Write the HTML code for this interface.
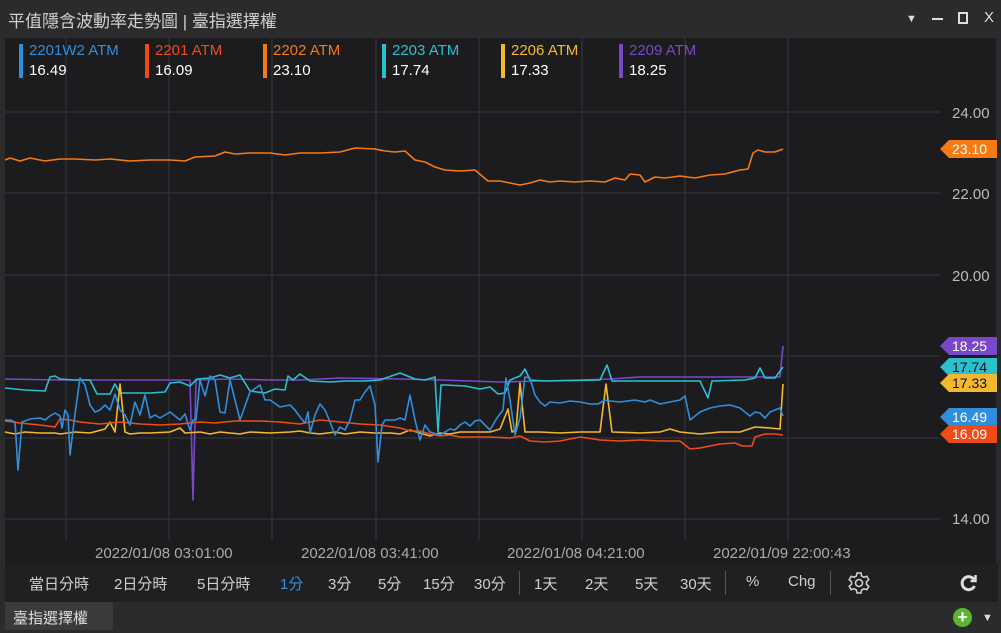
<!DOCTYPE html>
<html><head><meta charset="utf-8"><style>
*{margin:0;padding:0;box-sizing:border-box}
body{width:1001px;height:633px;background:#2b2b2e;font-family:"Liberation Sans","Noto Sans CJK TC",sans-serif;overflow:hidden;position:relative;color:#ddd}
.title{position:absolute;left:8px;top:7px;font-size:17px;color:#d0d0d0}
.ctl{position:absolute;font-size:16px;color:#ddd}
.chart{position:absolute;left:5px;top:38px;width:993px;height:525px;background:#1c1c1f}
.leg{position:absolute;top:41px;font-size:15px;line-height:20px}
.leg .bar{position:absolute;left:0;top:3px;width:4px;height:34px}
.leg .n{margin-left:10px}
.leg .v{margin-left:10px;color:#fff}
.tb{position:absolute;left:5px;top:563px;width:993px;height:39px;background:#202023}
.tb span{position:absolute;top:10px;font-size:15px;color:#cfcfcf}
.sep{position:absolute;top:8px;width:1px;height:24px;background:#555}
.tag{position:absolute;left:949px;width:48px;height:18px;font-size:14px;line-height:18px;padding-left:3px}
.tag:before{content:"";position:absolute;left:-9px;top:0;border-right:9px solid;border-right-color:inherit;border-top:9px solid transparent;border-bottom:9px solid transparent}
</style></head><body>
<div class="title">平值隱含波動率走勢圖 | 臺指選擇權</div>
<div class="ctl" style="left:906px;font-size:11px;top:13px">▼</div>
<div style="position:absolute;left:932px;top:18px;width:11px;height:2px;background:#ddd"></div>
<div style="position:absolute;left:958px;top:12px;width:10px;height:12px;border:2px solid #ddd"></div>
<div class="ctl" style="left:984px;top:9px;font-size:15px">X</div>
<div class="chart"></div>
<svg style="position:absolute;left:0;top:0" width="1001" height="563">
<g stroke="#2f2f34" stroke-width="1.5">
<line x1="5" y1="112" x2="940" y2="112"/><line x1="5" y1="193" x2="940" y2="193"/><line x1="5" y1="275" x2="940" y2="275"/><line x1="5" y1="356" x2="940" y2="356"/><line x1="5" y1="438" x2="940" y2="438"/><line x1="5" y1="519" x2="940" y2="519"/>
<line x1="66" y1="38" x2="66" y2="540"/><line x1="169" y1="38" x2="169" y2="540"/><line x1="272" y1="38" x2="272" y2="540"/><line x1="376" y1="38" x2="376" y2="540"/><line x1="479" y1="38" x2="479" y2="540"/><line x1="582" y1="38" x2="582" y2="540"/><line x1="685" y1="38" x2="685" y2="540"/><line x1="788" y1="38" x2="788" y2="540"/>
<line x1="997" y1="38" x2="997" y2="563"/>
</g>
<g fill="#bbb" font-size="15" font-family="Liberation Sans,sans-serif">
<text x="952" y="118">24.00</text><text x="952" y="199">22.00</text><text x="952" y="281">20.00</text><text x="952" y="524">14.00</text>
<text x="95" y="558" fill="#aaa">2022/01/08 03:01:00</text><text x="301" y="558" fill="#aaa">2022/01/08 03:41:00</text><text x="507" y="558" fill="#aaa">2022/01/08 04:21:00</text><text x="713" y="558" fill="#aaa">2022/01/09 22:00:43</text>
</g>
<g fill="none" stroke-width="1.6" stroke-linejoin="round">
<polyline stroke="#f57a14" points="5,160 10,158 20,161 30,158 45,161 60,159 75,159 95,160 110,159 130,161 150,160 170,160 185,161 195,157 215,156 225,152 235,154 250,153 270,153 285,155 300,153 320,153 340,152 355,148 375,149 385,151 395,152 405,151 415,160 425,162 435,167 445,170 460,171 475,170 482,176 488,181 500,181 510,183 520,185 530,183 540,180 550,182 560,181 575,182 590,181 605,182 615,178 625,180 630,174 640,175 645,182 655,177 665,178 680,176 695,178 710,175 725,174 740,170 748,169 753,153 758,150 765,152 775,152 783,149"/>
<polyline stroke="#7848c8" points="5,379 60,380 100,380 150,380 190,380 193,500 196,380 230,379 270,380 300,380 340,378 400,379 440,380 470,381 500,382 540,381 580,380 610,379 640,377 700,377 740,377 780,377 783,346"/>
<polyline stroke="#2ac0d0" points="5,388 25,390 45,391 50,377 55,376 60,379 75,380 90,380 97,394 110,394 115,384 120,393 125,393 150,393 165,392 170,383 180,382 190,386 197,379 210,378 220,375 230,378 240,375 250,391 265,393 275,389 285,390 288,376 293,380 300,374 310,381 330,382 345,381 365,381 380,380 400,373 415,379 425,380 435,377 438,432 441,385 445,385 465,386 480,389 490,387 498,394 505,393 510,380 520,376 525,369 530,380 545,381 600,380 607,365 612,381 640,381 680,381 700,381 708,398 712,381 745,380 755,378 760,368 765,378 775,378 783,367"/>
<polyline stroke="#f4b82e" points="5,432 15,434 25,432 40,433 55,433 60,434 75,432 90,433 105,429 110,422 115,432 120,384 125,432 130,434 140,433 150,433 170,432 180,428 185,433 200,432 210,434 220,432 240,434 250,432 270,433 290,432 300,431 310,433 320,434 335,432 345,434 360,432 375,433 380,433 390,433 400,434 410,430 420,433 430,436 440,433 450,434 460,432 470,432 480,432 490,432 500,429 508,409 512,432 516,430 520,383 525,432 540,432 560,433 580,432 600,432 606,384 612,432 640,433 660,432 670,429 680,432 700,434 720,432 740,432 755,427 770,428 780,429 783,384"/>
<polyline stroke="#ee4b18" points="5,421 20,423 40,425 55,427 60,419 70,420 80,422 100,424 120,422 140,424 160,425 180,424 200,422 215,423 235,421 260,421 280,422 300,424 320,420 340,422 360,424 380,425 400,428 410,431 420,431 430,434 440,436 450,435 460,437 475,437 490,437 510,438 520,436 530,441 545,442 560,441 570,439 580,437 600,440 620,441 640,440 660,441 680,441 690,449 700,448 720,444 735,443 742,446 752,446 755,437 765,434 775,434 783,435"/>
<polyline stroke="#2f8fdc" points="5,420 10,420 15,422 18,470 22,422 30,419 40,418 45,420 50,416 55,413 60,416 62,428 65,410 68,415 70,455 75,414 80,378 85,385 90,405 95,412 100,410 105,405 110,410 115,394 120,410 125,415 130,425 135,402 140,415 145,395 150,418 155,415 160,418 170,412 180,420 185,414 190,430 193,420 196,420 200,380 205,396 210,376 215,380 220,412 225,413 230,380 240,420 250,392 260,385 265,400 270,400 280,407 290,405 295,410 300,417 305,423 308,412 310,433 315,415 320,404 325,410 330,422 335,435 340,427 345,430 350,420 355,400 360,400 365,392 370,386 375,405 378,462 382,425 385,420 395,420 400,418 405,420 410,395 415,420 420,440 425,425 430,432 440,435 450,429 455,430 460,425 465,422 470,426 475,421 480,420 485,425 490,430 497,418 503,410 506,378 510,400 515,435 520,418 525,377 530,378 535,395 540,402 545,406 550,402 560,403 570,401 580,402 590,404 598,404 605,400 610,401 620,402 635,400 645,402 650,400 660,404 670,402 680,400 685,396 690,420 695,416 700,412 710,408 720,406 730,405 740,408 745,412 750,416 755,412 760,413 765,418 770,412 775,410 780,408 783,416"/>
</g>
</svg>
<div class="leg" style="left:19px"><div class="bar" style="background:#2f8fdc"></div><div class="n" style="color:#2f8fdc">2201W2 ATM</div><div class="v">16.49</div></div>
<div class="leg" style="left:145px"><div class="bar" style="background:#ee4b18"></div><div class="n" style="color:#ee4b18">2201 ATM</div><div class="v">16.09</div></div>
<div class="leg" style="left:263px"><div class="bar" style="background:#f57a14"></div><div class="n" style="color:#f57a14">2202 ATM</div><div class="v">23.10</div></div>
<div class="leg" style="left:382px"><div class="bar" style="background:#2ac0d0"></div><div class="n" style="color:#2ac0d0">2203 ATM</div><div class="v">17.74</div></div>
<div class="leg" style="left:501px"><div class="bar" style="background:#f4b82e"></div><div class="n" style="color:#f4b82e">2206 ATM</div><div class="v">17.33</div></div>
<div class="leg" style="left:619px"><div class="bar" style="background:#7848c8"></div><div class="n" style="color:#7848c8">2209 ATM</div><div class="v">18.25</div></div>
<div class="tag" style="top:140px;background:#f57a14;border-color:#f57a14;color:#fff">23.10</div>
<div class="tag" style="top:337px;background:#7848c8;border-color:#7848c8;color:#fff">18.25</div>
<div class="tag" style="top:358px;background:#2ac0d0;border-color:#2ac0d0;color:#111">17.74</div>
<div class="tag" style="top:374px;background:#f4b82e;border-color:#f4b82e;color:#111">17.33</div>
<div class="tag" style="top:408px;background:#2f8fdc;border-color:#2f8fdc;color:#fff">16.49</div>
<div class="tag" style="top:425px;background:#ee4b18;border-color:#ee4b18;color:#fff">16.09</div>
<div class="tb">
<span style="left:24px">當日分時</span><span style="left:109px">2日分時</span><span style="left:192px">5日分時</span><span style="left:275px;color:#2f8fdc">1分</span><span style="left:323px">3分</span><span style="left:373px">5分</span><span style="left:418px">15分</span><span style="left:469px">30分</span>
<div class="sep" style="left:514px"></div>
<span style="left:529px">1天</span><span style="left:580px">2天</span><span style="left:630px">5天</span><span style="left:675px">30天</span>
<div class="sep" style="left:720px"></div>
<span style="left:741px">%</span><span style="left:783px">Chg</span>
<div class="sep" style="left:825px"></div>
<svg style="position:absolute;left:842px;top:8px" width="24" height="24" viewBox="0 0 24 24" fill="none" stroke="#cfcfcf" stroke-width="1.6"><path d="M10 2h4l.6 3 2.3 1.3 2.9-1 2 3.4-2.3 2v2.6l2.3 2-2 3.4-2.9-1-2.3 1.3-.6 3h-4l-.6-3-2.3-1.3-2.9 1-2-3.4 2.3-2v-2.6l-2.3-2 2-3.4 2.9 1L9.4 5z"/><circle cx="12" cy="12" r="3.5"/></svg>
<svg style="position:absolute;left:954px;top:10px" width="20" height="20" viewBox="0 0 20 20" fill="none" stroke="#ddd" stroke-width="3"><path d="M15 6.5A6.5 6.5 0 1 0 15.5 13"/><path d="M16.5 2v6h-5" stroke-width="2.5"/></svg>
</div>
<div style="position:absolute;left:5px;top:602px;width:108px;height:28px;background:#3a3a3d;font-size:15px;color:#ddd;padding:5px 0 0 8px">臺指選擇權</div>
<div style="position:absolute;left:953px;top:608px;width:19px;height:19px;border-radius:50%;background:#5cb630;color:#fff;font-weight:bold;font-size:18px;line-height:19px;text-align:center">+</div>
<div style="position:absolute;left:982px;top:612px;font-size:11px;color:#ddd">▼</div>
</body></html>
